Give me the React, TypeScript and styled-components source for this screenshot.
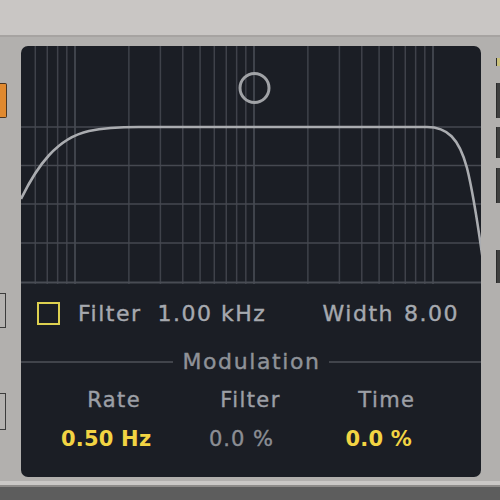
import React from "react";
import styled, { createGlobalStyle } from "styled-components";

const Global = createGlobalStyle`
  html, body { margin: 0; padding: 0; background: #b2b0ae; }
  * { box-sizing: border-box; }
`;

const Page = styled.div`
  width: 500px;
  height: 500px;
  display: flex;
  flex-direction: column;
  overflow: hidden;
  background: #b2b0ae;
  font-family: "DejaVu Sans", "Liberation Sans", sans-serif;
`;

const TopBar = styled.div`
  height: 37px;
  flex: none;
  background: #c9c6c4;
  border-bottom: 2px solid #a6a3a1;
`;

const Main = styled.div`
  height: 444px;
  flex: none;
  display: flex;
  padding-top: 9px;
`;

const BottomEdge = styled.div`
  flex: 1;
  border-top: 4px solid #cac8c6;
  background: #5d5d5d;
  box-shadow: inset 0 2px 0 #8e8c8a;
`;

const SideStrip = styled.div<{ $w: number; $pl?: number }>`
  width: ${(p) => p.$w}px;
  flex: none;
  display: flex;
  flex-direction: column;
  align-items: flex-start;
  padding-left: ${(p) => p.$pl ?? 0}px;
`;

const OrangeStub = styled.div<{ $mt: number }>`
  margin-top: ${(p) => p.$mt}px;
  width: 7px;
  height: 35px;
  background: #e0892f;
  border: 1px solid #4a3420;
  border-left: none;
  border-radius: 0 2px 2px 0;
`;

const BoxStub = styled.div<{ $mt: number; $h: number }>`
  margin-top: ${(p) => p.$mt}px;
  width: 6px;
  height: ${(p) => p.$h}px;
  border: 1.5px solid #3c3c3c;
  border-left: none;
  background: #b4b2b0;
`;

const RightBar = styled.div<{ $mt: number; $h: number; $c?: string }>`
  margin-top: ${(p) => p.$mt}px;
  width: 4px;
  height: ${(p) => p.$h}px;
  background: ${(p) => p.$c ?? "#3e3e3e"};
  border-left: 1px solid #2a2a2a;
`;

const Panel = styled.div`
  width: 460px;
  height: 431px;
  flex: none;
  background: #1b1e25;
  border-radius: 7px;
  display: flex;
  flex-direction: column;
  overflow: hidden;
`;

const Graph = styled.svg`
  display: block;
  width: 460px;
  height: 238px;
  flex: none;
`;

const FilterRow = styled.div`
  height: 58px;
  display: flex;
  align-items: center;
  padding: 0 22px 0 16px;
  font-size: 22px;
  letter-spacing: 1.5px;
  color: #a6a9af;
  -webkit-text-stroke: 0.4px #a6a9af;
`;

const Check = styled.div`
  width: 23px;
  height: 23px;
  border: 2px solid #ddd050;
  flex: none;
  margin-right: 18px;
`;

const Text = styled.span<{ $ml?: number }>`
  margin-left: ${(p) => p.$ml ?? 0}px;
  white-space: nowrap;
`;

const Spacer = styled.div`
  flex: 1;
`;

const Divider = styled.div`
  margin-top: 8px;
  height: 24px;
  display: flex;
  align-items: center;
`;

const Rule = styled.div`
  flex: 1;
  height: 2px;
  background: #41444b;
`;

const DividerText = styled.span`
  padding: 0 8px 0 9px;
  font-size: 22px;
  letter-spacing: 1.6px;
  color: #8f9298;
  -webkit-text-stroke: 0.4px #8f9298;
  line-height: 24px;
`;

const Grid3 = styled.div<{ $mt: number }>`
  margin-top: ${(p) => p.$mt}px;
  display: grid;
  grid-template-columns: repeat(3, 1fr);
  padding: 0 26px 0 25px;
  height: 28px;
  align-items: center;
`;

const Label = styled.div`
  text-align: center;
  font-size: 21px;
  letter-spacing: 1.4px;
  color: #9c9fa5;
  -webkit-text-stroke: 0.4px #9c9fa5;
  line-height: 28px;
`;

const Value = styled.div<{ $on?: boolean }>`
  text-align: center;
  padding-right: ${(p) => (p.$on ? 16 : 18)}px;
  font-size: ${(p) => (p.$on ? 21 : 21)}px;
  font-weight: ${(p) => (p.$on ? 700 : 400)};
  letter-spacing: ${(p) => (p.$on ? 0.2 : 1)}px;
  color: ${(p) => (p.$on ? "#f2d443" : "#8b8e94")};
  -webkit-text-stroke: ${(p) => (p.$on ? "0" : "0.4px #8b8e94")};
  line-height: 28px;
  white-space: nowrap;
`;

const decades = [-125, 54, 233, 412];
const vLines: { x: number; major: boolean }[] = [];
decades.forEach((d) => {
  for (let k = 1; k <= 9; k++) {
    const x = d + 179 * Math.log10(k);
    if (x > 1 && x < 459) vLines.push({ x, major: k === 1 });
  }
});
const hLines = [81, 119.5, 158, 197];

export default function App() {
  return (
    <Page>
      <Global />
      <TopBar />
      <Main>
        <SideStrip $w={21}>
          <OrangeStub $mt={37} />
          <BoxStub $mt={175} $h={35} />
          <BoxStub $mt={65} $h={37} />
        </SideStrip>
        <Panel>
          <Graph viewBox="0 0 460 238">
            {vLines.map((l, i) => (
              <line
                key={i}
                x1={l.x}
                x2={l.x}
                y1={0}
                y2={238}
                stroke={l.major ? "#4d5058" : "#3f424a"}
                strokeWidth={1.5}
              />
            ))}
            {hLines.map((y, i) => (
              <line key={i} x1={0} x2={460} y1={y} y2={y} stroke="#464951" strokeWidth={1.5} />
            ))}
            <line x1={0} x2={460} y1={236.5} y2={236.5} stroke="#494c54" strokeWidth={2} />
            <path
              d="M0,153 C16,120 36,92 68,85 C84,81.5 100,81 118,81 L406,81 C426,81 438,92 446,122 C451,142 456,172 462,215"
              fill="none"
              stroke="#aaacb0"
              strokeWidth={2.6}
            />
            <circle cx={233.5} cy={42} r={14.5} fill="none" stroke="#a0a2a6" strokeWidth={3} />
          </Graph>
          <FilterRow>
            <Check />
            <Text>Filter</Text>
            <Text $ml={16}>1.00 kHz</Text>
            <Spacer />
            <Text>Width</Text>
            <Text $ml={10}>8.00</Text>
          </FilterRow>
          <Divider>
            <Rule />
            <DividerText>Modulation</DividerText>
            <Rule />
          </Divider>
          <Grid3 $mt={12}>
            <Label>Rate</Label>
            <Label>Filter</Label>
            <Label>Time</Label>
          </Grid3>
          <Grid3 $mt={11}>
            <Value $on>0.50 Hz</Value>
            <Value>0.0 %</Value>
            <Value $on>0.0 %</Value>
          </Grid3>
        </Panel>
        <SideStrip $w={19} $pl={15}>
          <RightBar $mt={12} $h={8} $c="#c9c07a" />
          <RightBar $mt={17} $h={35} />
          <RightBar $mt={9} $h={31} />
          <RightBar $mt={10} $h={35} />
          <RightBar $mt={47} $h={33} />
        </SideStrip>
      </Main>
      <BottomEdge />
    </Page>
  );
}
